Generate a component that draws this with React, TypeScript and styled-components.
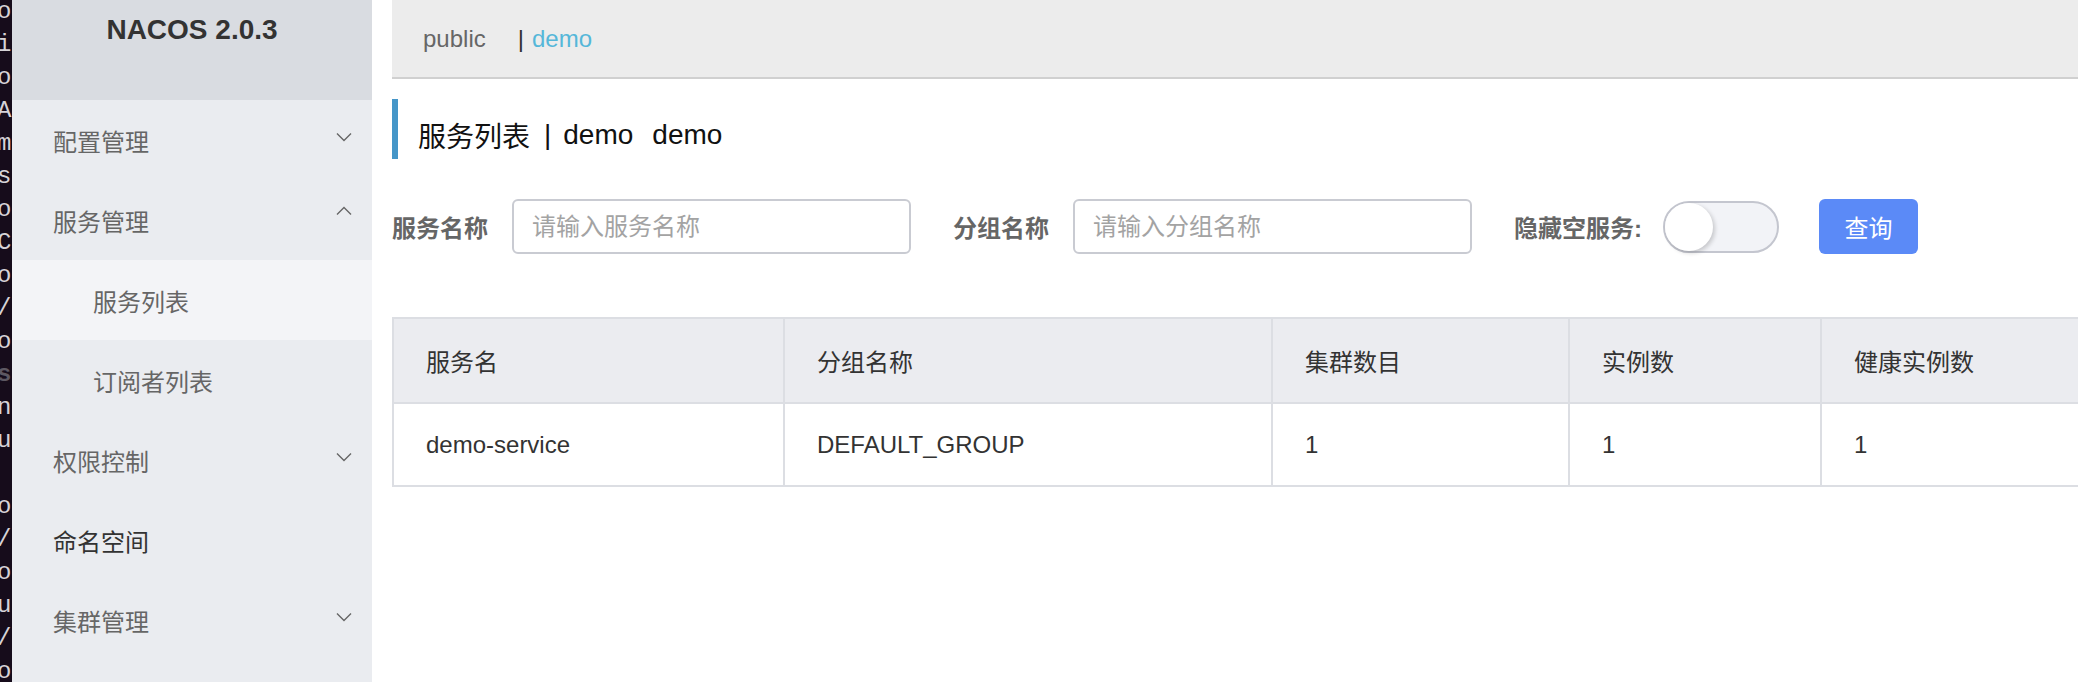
import styled, { createGlobalStyle } from 'styled-components'

const GlobalStyle = createGlobalStyle`
  html, body {
    margin: 0;
    padding: 0;
    background: #fff;
    overflow: hidden;
  }
  * {
    box-sizing: border-box;
  }
`

const FONT = `"Liberation Sans", "Noto Sans CJK SC", sans-serif`

const Page = styled.div`
  display: flex;
  height: 100vh;
  font-family: ${FONT};
`

// pedaço do terminal que aparece atrás da janela
const Terminal = styled.div`
  width: 12px;
  flex-shrink: 0;
  background: #160c1b;
  overflow: hidden;
`

const TermLine = styled.div<{ $dim?: boolean }>`
  height: 33px;
  line-height: 33px;
  margin-left: -3px;
  font-family: "Liberation Mono", monospace;
  font-size: 24px;
  font-weight: ${(p) => (p.$dim ? 700 : 400)};
  color: ${(p) => (p.$dim ? '#5d5862' : '#d6d3d8')};
  white-space: pre;
  &:first-child {
    margin-top: -5px;
  }
`

const Sidebar = styled.aside`
  width: 360px;
  flex-shrink: 0;
  background: #eaecf0;
  display: flex;
  flex-direction: column;
`

const Brand = styled.div`
  height: 100px;
  background: #d9dce1;
  text-align: center;
  padding-top: 12px;
  font-size: 28px;
  line-height: 36px;
  font-weight: 700;
  color: #333;
`

const MenuItem = styled.div<{ $sub?: boolean; $active?: boolean; $strong?: boolean }>`
  height: 80px;
  display: flex;
  align-items: center;
  justify-content: space-between;
  padding: 0 20px 0 ${(p) => (p.$sub ? '81px' : '41px')};
  font-size: 24px;
  color: ${(p) => (p.$strong ? '#333' : '#666')};
  background: ${(p) => (p.$active ? '#f3f4f7' : 'transparent')};
`

const Chevron = styled.svg<{ $up?: boolean }>`
  width: 16px;
  height: 10px;
  margin-top: ${(p) => (p.$up ? '-18px' : '-6px')};
  transform: ${(p) => (p.$up ? 'rotate(180deg)' : 'none')};
`

const Main = styled.main`
  flex: 1;
  min-width: 0;
  padding-left: 20px;
  overflow: hidden;
`

const TopBar = styled.div`
  height: 79px;
  background: #ececec;
  border-bottom: 2px solid #d0d0d0;
  display: flex;
  align-items: center;
  padding-left: 31px;
  font-size: 24px;
  color: #666;
`

const NsSep = styled.span`
  margin-left: 32px;
  margin-right: 8px;
  color: #333;
`

const NsLink = styled.span`
  color: #55b7d9;
`

const TitleRow = styled.div`
  margin-top: 20px;
  height: 60px;
  border-left: 6px solid #4596c8;
  display: flex;
  align-items: center;
  padding-left: 20px;
  padding-top: 12px;
  font-size: 28px;
  color: #111;
`

const TitleSep = styled.span`
  margin: 0 12px 0 14px;
`

const TitleGap = styled.span`
  margin-left: 19px;
`

const SearchForm = styled.div`
  margin-top: 40px;
  height: 55px;
  display: flex;
  align-items: center;
`

const FormItem = styled.div`
  display: flex;
  align-items: center;
  margin-right: 42px;
`

const Label = styled.label<{ $gap?: number }>`
  font-size: 24px;
  font-weight: 700;
  color: #666;
  margin-right: ${(p) => p.$gap ?? 24}px;
  white-space: nowrap;
`

const TextInput = styled.input`
  width: 399px;
  height: 55px;
  border: 2px solid #c9cbd2;
  border-radius: 6px;
  padding: 0 18px;
  font-family: ${FONT};
  font-size: 24px;
  color: #333;
  outline: none;
  &::placeholder {
    color: #a3a3a3;
  }
`

const Switch = styled.div`
  width: 116px;
  height: 52px;
  border-radius: 26px;
  border: 2px solid #c4c6cf;
  background: #f2f3f7;
  position: relative;
  margin-right: -2px;
`

const Knob = styled.div`
  position: absolute;
  left: 0;
  top: 0;
  width: 48px;
  height: 48px;
  border-radius: 50%;
  background: #fff;
  box-shadow: 2px 2px 4px rgba(0, 0, 0, 0.18);
`

const QueryButton = styled.button`
  width: 99px;
  height: 55px;
  border: none;
  border-radius: 6px;
  background: #5b8af7;
  color: #fff;
  font-family: ${FONT};
  font-size: 24px;
`

const Table = styled.table`
  margin-top: 63px;
  width: 1900px;
  border-collapse: collapse;
  border: 2px solid #dcdee3;
  font-size: 24px;
  color: #333;
  table-layout: fixed;
`

const Th = styled.th<{ $w: number }>`
  width: ${(p) => p.$w}px;
  height: 85px;
  background: #ebecf0;
  border: 2px solid #dcdee3;
  text-align: left;
  font-weight: 400;
  padding: 0 0 0 32px;
`

const Td = styled.td`
  height: 83px;
  border: 2px solid #dcdee3;
  padding: 0 0 0 32px;
`

const termChars = ['o', 'i', 'o', 'A', 'm', 's', 'o', 'C', 'o', '/', 'o', 's', 'n', 'u', ' ', 'o', '/', 'o', 'u', '/', 'o']

const columns = [
  { title: '服务名', w: 391 },
  { title: '分组名称', w: 488 },
  { title: '集群数目', w: 297 },
  { title: '实例数', w: 252 },
  { title: '健康实例数', w: 472 },
]

const rows = [['demo-service', 'DEFAULT_GROUP', '1', '1', '1']]

const menu = [
  { label: '配置管理', arrow: 'down' },
  { label: '服务管理', arrow: 'up' },
  { label: '服务列表', sub: true, active: true },
  { label: '订阅者列表', sub: true },
  { label: '权限控制', arrow: 'down' },
  { label: '命名空间', strong: true },
  { label: '集群管理', arrow: 'down' },
]

function Arrow({ up }: { up?: boolean }) {
  return (
    <Chevron $up={up} viewBox="0 0 16 10">
      <path d="M1 1.5 L8 8.5 L15 1.5" fill="none" stroke="#666" strokeWidth="1.4" />
    </Chevron>
  )
}

export default function App() {
  return (
    <>
      <GlobalStyle />
      <Page>
        <Terminal>
          {termChars.map((c, i) => (
            <TermLine key={i} $dim={i === 11}>
              {c}
            </TermLine>
          ))}
        </Terminal>

        <Sidebar>
          <Brand>NACOS 2.0.3</Brand>
          {menu.map((m) => (
            <MenuItem key={m.label} $sub={m.sub} $active={m.active} $strong={m.strong}>
              <span>{m.label}</span>
              {m.arrow && <Arrow up={m.arrow === 'up'} />}
            </MenuItem>
          ))}
        </Sidebar>

        <Main>
          <TopBar>
            <span>public</span>
            <NsSep>|</NsSep>
            <NsLink>demo</NsLink>
          </TopBar>

          <TitleRow>
            <span>服务列表</span>
            <TitleSep>|</TitleSep>
            <span>demo</span>
            <TitleGap>demo</TitleGap>
          </TitleRow>

          <SearchForm>
            <FormItem>
              <Label>服务名称</Label>
              <TextInput placeholder="请输入服务名称" />
            </FormItem>
            <FormItem>
              <Label>分组名称</Label>
              <TextInput placeholder="请输入分组名称" />
            </FormItem>
            <FormItem>
              <Label $gap={21}>隐藏空服务:</Label>
              <Switch>
                <Knob />
              </Switch>
            </FormItem>
            <QueryButton type="button">查询</QueryButton>
          </SearchForm>

          <Table>
            <thead>
              <tr>
                {columns.map((c) => (
                  <Th key={c.title} $w={c.w}>
                    {c.title}
                  </Th>
                ))}
              </tr>
            </thead>
            <tbody>
              {rows.map((r, i) => (
                <tr key={i}>
                  {r.map((v, j) => (
                    <Td key={j}>{v}</Td>
                  ))}
                </tr>
              ))}
            </tbody>
          </Table>
        </Main>
      </Page>
    </>
  )
}
